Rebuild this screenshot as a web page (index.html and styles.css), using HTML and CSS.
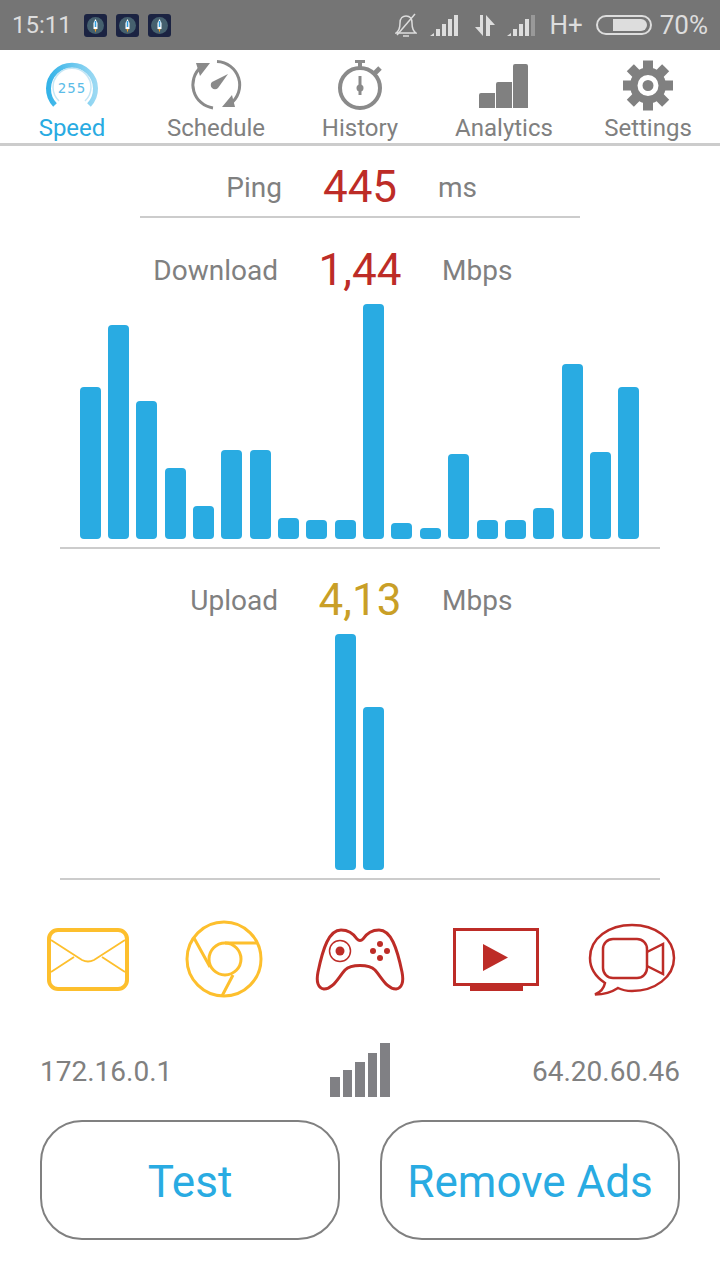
FILE: index.html
```html
<!DOCTYPE html>
<html lang="en">
<head>
  <meta charset="UTF-8">
  <meta name="viewport" content="width=device-width, initial-scale=1.0">
  <title>Speed Test</title>
  <link rel="stylesheet" href="styles.css">
</head>
<body>
  <div class="status-bar">
    <span class="status-time">15:11</span>
    <div class="status-apps">
      <svg class="app-icon" viewBox="0 0 23 23"><rect width="23" height="23" rx="3" fill="#1b2342"/><circle cx="11.500" cy="11.500" r="8.500" fill="#45606e"/><path d="M11.500 5l2 4v6h-4V9z" fill="#fff"/><path d="M10.700 7h1.600v6h-1.600z" fill="#2f9fe0"/><path d="M10.500 15h2l-1 3.500z" fill="#f39c1f"/></svg>
      <svg class="app-icon" viewBox="0 0 23 23"><rect width="23" height="23" rx="3" fill="#1b2342"/><circle cx="11.500" cy="11.500" r="8.500" fill="#45606e"/><path d="M11.500 5l2 4v6h-4V9z" fill="#fff"/><path d="M10.700 7h1.600v6h-1.600z" fill="#2f9fe0"/><path d="M10.500 15h2l-1 3.500z" fill="#f39c1f"/></svg>
      <svg class="app-icon" viewBox="0 0 23 23"><rect width="23" height="23" rx="3" fill="#1b2342"/><circle cx="11.500" cy="11.500" r="8.500" fill="#45606e"/><path d="M11.500 5l2 4v6h-4V9z" fill="#fff"/><path d="M10.700 7h1.600v6h-1.600z" fill="#2f9fe0"/><path d="M10.500 15h2l-1 3.500z" fill="#f39c1f"/></svg>
    </div>
    <div class="status-right">
      <svg class="status-bell" viewBox="0 0 22 24" fill="none" stroke="#ddd" stroke-width="1.500"><path d="M1 20C4 18 5 15 5 10C5 5 8 3 11 3C15 3 17 6 17 10C17 15 18 18 21 20Z"/><path d="M8 23h6"/><path d="M2 22L20 1"/></svg>
      <svg class="status-signal" viewBox="0 0 32 22" fill="#ddd"><path d="M0 22l4-3v3zM6 22v-7h4v7zM12 22V10h4v12zM18 22V5h4v17zM24 22V1h4v21z"/></svg>
      <svg class="status-arrows" viewBox="0 0 22 22" fill="#ddd"><path d="M9 1v21L1 13h5V1zM12 22V1l9 10h-5v11z"/></svg>
      <svg class="status-signal" viewBox="0 0 32 22" fill="#ddd"><path d="M0 22l4-3v3zM6 22v-7h4v7zM12 22V10h4v12zM18 22V5h4v17z"/><path d="M24 22V1h4v21z" fill="#999"/></svg>
      <span class="status-text status-network">H+</span>
      <div class="battery"><div class="battery-level"></div></div>
      <span class="status-text status-percent">70%</span>
    </div>
  </div>

  <div class="tabs">
    <div class="tab tab-active">
      <svg class="tab-icon" viewBox="0 0 60 55" fill="none">
        <defs>
          <linearGradient id="gaugeArc" x1="0" y1="0" x2="1" y2="0">
            <stop offset="0" stop-color="#35b3e8"/>
            <stop offset="1" stop-color="#9bd9f3"/>
          </linearGradient>
        </defs>
        <path d="M13 45A23.500 23.500 0 1 1 47 45" stroke="url(#gaugeArc)" stroke-width="5"/>
        <path d="M17 41A19 19 0 1 1 43 41" stroke="#c5e6f5" stroke-width="1.500"/>
        <text class="gauge-text" x="30" y="33" text-anchor="middle">255</text>
      </svg>
      <span>Speed</span>
    </div>
    <div class="tab">
      <svg class="tab-icon" viewBox="0 0 60 55" fill="none">
        <path d="M31 1.500A23.500 23.500 0 0 1 44 44" stroke="#8a8a8a" stroke-width="3"/>
        <path d="M27 48A23.500 23.500 0 0 1 15 7" stroke="#8a8a8a" stroke-width="3"/>
        <path d="M10 3h14l-10 13zM49 47H36l10-12z" fill="#8a8a8a"/>
        <path d="M42 14L32 28A4 4 0 1 1 26 22Z" fill="#8a8a8a"/>
      </svg>
      <span>Schedule</span>
    </div>
    <div class="tab">
      <svg class="tab-icon" viewBox="0 0 60 55" fill="none">
        <circle cx="30" cy="28" r="20" stroke="#8a8a8a" stroke-width="4"/>
        <path d="M25 0h10v3h-3v6h-4V3h-3z" fill="#8a8a8a"/>
        <path d="M44 14l6-6" stroke="#8a8a8a" stroke-width="5"/>
        <path d="M28.500 16h3v19h-3z" fill="#8a8a8a"/>
        <circle cx="30" cy="28" r="3.500" fill="#8a8a8a"/>
      </svg>
      <span>History</span>
    </div>
    <div class="tab">
      <svg class="tab-icon" viewBox="0 0 60 55" fill="#808080">
        <path d="M5 35q0-2 2-2h14v15H5zM22 24q0-2 2-2h14v26H22zM39 6q0-2 2-2h11q2 0 2 2v42H39z"/>
      </svg>
      <span>Analytics</span>
    </div>
    <div class="tab">
      <svg class="tab-icon" viewBox="0 0 60 55">
        <g fill="#808080">
          <rect x="25" y="0.500" width="10" height="50"/>
          <rect x="25" y="0.500" width="10" height="50" transform="rotate(45 30 25.500)"/>
          <rect x="25" y="0.500" width="10" height="50" transform="rotate(90 30 25.500)"/>
          <rect x="25" y="0.500" width="10" height="50" transform="rotate(135 30 25.500)"/>
          <circle cx="30" cy="25.500" r="18"/>
        </g>
        <circle cx="30" cy="25.500" r="8" fill="none" stroke="#fff" stroke-width="5"/>
      </svg>
      <span>Settings</span>
    </div>
  </div>

  <div class="content">
    <div class="metric metric-ping">
      <span class="metric-label">Ping</span>
      <span class="metric-value red">445</span>
      <span class="metric-unit">ms</span>
    </div>

    <div class="metric metric-download">
      <span class="metric-label">Download</span>
      <span class="metric-value red">1,44</span>
      <span class="metric-unit">Mbps</span>
    </div>
    <div class="chart chart-download">
      <div class="bar" style="height:152px"></div>
      <div class="bar" style="height:214px"></div>
      <div class="bar" style="height:138px"></div>
      <div class="bar" style="height:71px"></div>
      <div class="bar" style="height:33px"></div>
      <div class="bar" style="height:89px"></div>
      <div class="bar" style="height:89px"></div>
      <div class="bar" style="height:21px"></div>
      <div class="bar" style="height:19px"></div>
      <div class="bar" style="height:19px"></div>
      <div class="bar" style="height:235px"></div>
      <div class="bar" style="height:16px"></div>
      <div class="bar" style="height:11px"></div>
      <div class="bar" style="height:85px"></div>
      <div class="bar" style="height:19px"></div>
      <div class="bar" style="height:19px"></div>
      <div class="bar" style="height:31px"></div>
      <div class="bar" style="height:175px"></div>
      <div class="bar" style="height:87px"></div>
      <div class="bar" style="height:152px"></div>
    </div>

    <div class="metric metric-upload">
      <span class="metric-label">Upload</span>
      <span class="metric-value gold">4,13</span>
      <span class="metric-unit">Mbps</span>
    </div>
    <div class="chart chart-upload">
      <div class="bar" style="height:236px"></div>
      <div class="bar" style="height:163px"></div>
    </div>

    <div class="services">
      <svg class="icon-mail" viewBox="0 0 82 63" fill="none" stroke="#fdbf2d" stroke-width="1.800">
        <rect x="2" y="2" width="78" height="59" rx="9" stroke-width="4"/>
        <path d="M4 12L35 32q6 3 12 0L78 12M4 44L27 29M78 44L55 29"/>
      </svg>
      <svg class="icon-chrome" viewBox="0 0 78 78" fill="none" stroke="#fdbf2d" stroke-width="3">
        <circle cx="39" cy="39" r="37"/>
        <circle cx="40" cy="39" r="16"/>
        <path d="M40 23H72M9 18L25 47M48 55L37 76"/>
      </svg>
      <svg class="icon-pad" viewBox="0 0 90 63" fill="none" stroke="#bd2c27" stroke-width="3">
        <path d="M26 2C33 2 38 5 42 11Q45 14 48 11C52 5 57 2 64 2C76 2 82 20 87 44C89 54 87 60 81 61C72 61 67 50 60 42C54 36 36 36 30 42C23 50 18 61 9 61C3 60 1 54 3 44C8 20 14 2 26 2Z"/>
        <circle cx="25" cy="23" r="10.500" stroke-width="1.500"/>
        <circle cx="25" cy="23" r="4.500" fill="#bd2c27" stroke="none"/>
        <g fill="#bd2c27" stroke="none">
          <circle cx="58" cy="23" r="3"/>
          <circle cx="65" cy="16" r="3"/>
          <circle cx="72" cy="23" r="3"/>
          <circle cx="65" cy="30" r="3"/>
        </g>
      </svg>
      <svg class="icon-tv" viewBox="0 0 86 63" fill="none">
        <rect x="1.500" y="1.500" width="83" height="55" stroke="#bd2c27" stroke-width="3"/>
        <path d="M17 58h53v5H17zM30 16l25 13.500L30 43z" fill="#bd2c27"/>
      </svg>
      <svg class="icon-call" viewBox="0 0 88 73" fill="none" stroke="#bd2c27" stroke-width="2.500">
        <path d="M44 2C21 2 2 15 2 35C2 45 8 54 17 60C16 65 13 69 7 71.500C15 71.500 24 69 30 65C34 67 39 68 44 68C67 68 86 54 86 35C86 15 67 2 44 2Z"/>
        <rect x="15" y="16" width="44" height="39" rx="10"/>
        <path d="M59 29L75 21V51L59 43"/>
      </svg>
    </div>

    <div class="info">
      <span>172.16.0.1</span>
      <svg class="info-signal" viewBox="0 0 60 54" fill="#808084"><rect x="0" y="34" width="10" height="20"/><rect x="13" y="27" width="9" height="27"/><rect x="25" y="19" width="10" height="35"/><rect x="38" y="10" width="9" height="44"/><rect x="50" y="0" width="10" height="54"/></svg>
      <span class="info-right">64.20.60.46</span>
    </div>

    <div class="actions">
      <button class="action-btn">Test</button>
      <button class="action-btn">Remove Ads</button>
    </div>
  </div>
</body>
</html>
```

FILE: styles.css
```css
* {
  box-sizing: border-box;
}

body {
  font-family: Roboto, "Liberation Sans", sans-serif;
  margin: 0;
  height: 1280px;
  overflow: hidden;
  background-color: #fff;
  color: #808080;
}

.status-bar {
  display: flex;
  align-items: center;
  height: 50px;
  padding: 0 12px;
  background-color: #757575;
  color: #ddd;
  font-size: 24px;
}

.status-apps {
  display: flex;
  gap: 9px;
  margin-left: 12px;
}

.app-icon {
  width: 23px;
  height: 23px;
}

.status-right {
  display: flex;
  align-items: center;
  margin-left: auto;
}

.status-bell {
  width: 22px;
  height: 24px;
  margin-right: 13px;
}

.status-signal {
  width: 32px;
  height: 22px;
}

.status-arrows {
  width: 22px;
  height: 22px;
  margin: 0 11px 0 12px;
}

.status-text {
  font-size: 26px;
}

.status-network {
  margin-left: 10px;
}

.status-percent {
  margin-left: 8px;
}

.battery {
  width: 56px;
  height: 20px;
  margin-left: 13px;
  padding: 2px 3px 2px 15px;
  border: 2px solid #ddd;
  border-radius: 10px;
}

.battery-level {
  height: 100%;
  background-color: #ddd;
  border-radius: 0 6px 6px 0;
}

.tabs {
  display: flex;
  height: 96px;
  padding: 10px 0 0;
  border-bottom: 3px solid #ccc;
}

.tab {
  display: flex;
  flex-direction: column;
  align-items: center;
  width: 144px;
  font-size: 24px;
  line-height: 26px;
}

.tab-active {
  color: #29abe2;
}

.tab-icon {
  width: 60px;
  height: 55px;
}

.gauge-text {
  font-family: "DejaVu Sans Mono", monospace;
  font-size: 14px;
  letter-spacing: 1px;
  fill: #5cbce8;
}

.content {
  padding: 0 40px;
}

.metric {
  display: grid;
  grid-template-columns: 1fr 164px 1fr;
  align-items: center;
  height: 50px;
  font-size: 28px;
}

.metric-label {
  text-align: right;
}

.metric-value {
  font-size: 44px;
  text-align: center;
}

.metric-ping {
  grid-template-columns: 1fr 156px 1fr;
  width: 440px;
  height: 57px;
  margin: 15px auto 0;
  padding-bottom: 7px;
  border-bottom: 2px solid #ccc;
}

.metric-download {
  margin-top: 26px;
}

.metric-upload {
  margin-top: 25px;
}

.red {
  color: #bd2c27;
}

.gold {
  color: #c99f27;
}

.chart {
  display: flex;
  align-items: flex-end;
  justify-content: space-between;
  margin: 10px 20px 0;
  padding: 0 20.5px 8px 19.5px;
  border-bottom: 2px solid #ccc;
}

.chart-download {
  height: 245px;
}

.chart-upload {
  justify-content: center;
  gap: 7px;
  height: 246px;
}

.bar {
  width: 21px;
  background-color: #29abe2;
  border-radius: 4px;
}

.services {
  display: grid;
  grid-template-columns: repeat(5, 136px);
  align-items: center;
  justify-items: center;
  height: 82px;
  margin: 38px -20px 0;
}

.icon-mail {
  width: 82px;
  height: 63px;
}

.icon-chrome {
  width: 78px;
  height: 78px;
}

.icon-pad {
  width: 90px;
  height: 63px;
}

.icon-tv {
  width: 86px;
  height: 63px;
}

.icon-call {
  width: 88px;
  height: 73px;
}

.info {
  display: grid;
  grid-template-columns: 1fr 60px 1fr;
  align-items: center;
  height: 54px;
  margin-top: 43px;
  font-size: 28px;
}

.info-signal {
  width: 60px;
  height: 54px;
  margin-bottom: 2px;
}

.info-right {
  text-align: right;
}

.actions {
  display: flex;
  gap: 40px;
  margin-top: 23px;
}

.action-btn {
  flex: 1;
  height: 120px;
  padding-top: 4px;
  background-color: #fff;
  border: 2px solid #808080;
  border-radius: 42px;
  color: #29abe2;
  font-family: inherit;
  font-size: 44px;
}
```
